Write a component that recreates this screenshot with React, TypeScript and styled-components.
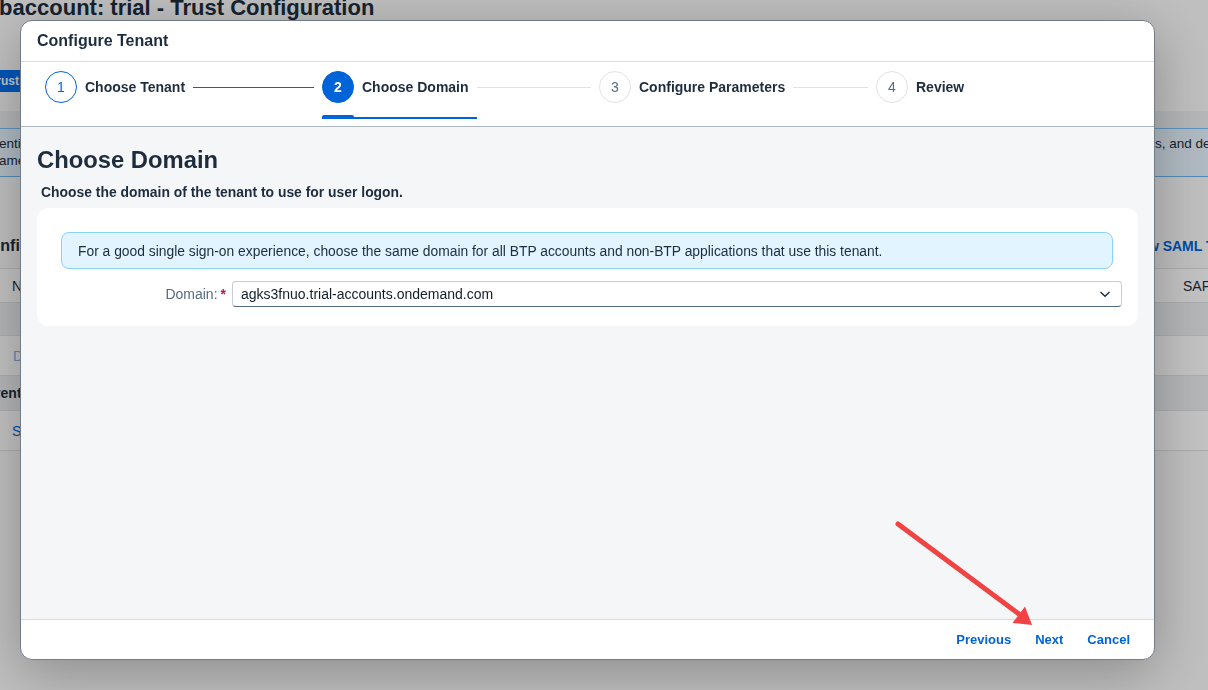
import { FC, ReactNode } from 'react';
import { styled, createGlobalStyle } from 'styled-components';

const GlobalStyle = createGlobalStyle`
  html, body {
    margin: 0;
    padding: 0;
    width: 1208px;
    height: 690px;
    overflow: hidden;
  }
  body {
    font-family: 'Liberation Sans', Arial, sans-serif;
    color: #1d2d3e;
  }
  * {
    box-sizing: border-box;
  }
`;

type StepState = 'done' | 'current' | 'todo';

const steps: { label: string; state: StepState }[] = [
  { label: 'Choose Tenant', state: 'done' },
  { label: 'Choose Domain', state: 'current' },
  { label: 'Configure Parameters', state: 'todo' },
  { label: 'Review', state: 'todo' },
];

/* background page (behind the dimmed overlay) */

const Page = styled.div`
  width: 1208px;
  height: 690px;
  background: #fbfbfc;
  overflow: hidden;
`;

const PageTitle = styled.h1`
  margin: -5px 0 0 -29px;
  font: bold 22px/26px 'Liberation Sans', Arial, sans-serif;
  color: #1d2d3e;
  white-space: nowrap;
`;

const Toolbar = styled.div`
  display: flex;
  margin-top: 49px;
  height: 22px;
`;

const EmphasizedButton = styled.span`
  display: flex;
  align-items: center;
  margin-left: -75px;
  padding: 0 8px;
  height: 22px;
  background: #0070f2;
  color: #fff;
  font-size: 12px;
  font-weight: bold;
  border-radius: 4px;
  white-space: nowrap;
`;

const Band = styled.div`
  margin-top: 19px;
  height: 17px;
  background: #edeff1;
`;

const PageStrip = styled.div`
  display: flex;
  justify-content: space-between;
  height: 49px;
  padding-top: 6px;
  background: #e8f5ff;
  border-top: 1px solid #7cc4f8;
  border-bottom: 1px solid #6fb6f0;
  font-size: 13.5px;
  line-height: 17px;
  color: #1d2d3e;
  white-space: nowrap;
`;

const Fragment = styled.div<{ $shift?: number; $width?: number }>`
  flex: none;
  margin-left: ${(p) => p.$shift ?? 0}px;
  width: ${(p) => (p.$width ? `${p.$width}px` : 'auto')};
  white-space: nowrap;
`;

const SectionRow = styled.div`
  display: flex;
  justify-content: space-between;
  margin-top: 59px;
  height: 20px;
  line-height: 20px;
`;

const SectionTitle = styled.span<{ $shift: number }>`
  margin-left: ${(p) => p.$shift}px;
  font-size: 16px;
  font-weight: bold;
  color: #1d2d3e;
  white-space: nowrap;
`;

const PageLink = styled.span<{ $width: number }>`
  flex: none;
  width: ${(p) => p.$width}px;
  font-size: 14px;
  font-weight: bold;
  color: #0064d9;
  white-space: nowrap;
`;

const Table = styled.div`
  margin-top: 12px;
  border-top: 1px solid #e1e4e7;
`;

const Row = styled.div<{ $height: number; $group?: boolean }>`
  display: flex;
  justify-content: space-between;
  align-items: center;
  height: ${(p) => p.$height}px;
  background: ${(p) => (p.$group ? '#edeff1' : '#ffffff')};
  border-bottom: 1px solid #e1e4e7;
  font-size: 14px;
  white-space: nowrap;
`;

const Cell = styled.span<{
  $shift?: number;
  $tone?: 'text' | 'link' | 'muted';
  $bold?: boolean;
  $width?: number;
}>`
  flex: none;
  margin-left: ${(p) => p.$shift ?? 0}px;
  width: ${(p) => (p.$width ? `${p.$width}px` : 'auto')};
  font-weight: ${(p) => (p.$bold ? 'bold' : 'normal')};
  color: ${(p) =>
    p.$tone === 'link' ? '#0064d9' : p.$tone === 'muted' ? '#7fb3f2' : '#1d2d3e'};
`;

/* overlay + dialog */

const Overlay = styled.div`
  position: fixed;
  inset: 0;
  display: flex;
  padding: 20px 53px 30px 20px;
  background: rgba(0, 0, 0, 0.24);
`;

const Dialog = styled.section`
  flex: 1;
  display: flex;
  flex-direction: column;
  background: #fff;
  border: 1px solid #737d87;
  border-radius: 12px;
  overflow: hidden;
  box-shadow: 0 12px 56px rgba(0, 0, 0, 0.28);
`;

const DialogHeader = styled.header`
  display: flex;
  align-items: center;
  flex: none;
  height: 41px;
  padding: 0 16px;
  border-bottom: 1px solid #d9dce0;
`;

const DialogTitle = styled.h2`
  margin: 0;
  font-size: 16px;
  font-weight: bold;
  color: #1d2d3e;
`;

const WizardNav = styled.nav`
  display: flex;
  flex: none;
  height: 65px;
  padding: 9px 0 0 24px;
  border-bottom: 1px solid #aeb8c2;
`;

const Step = styled.div<{ $last?: boolean }>`
  display: flex;
  align-items: flex-start;
  flex: ${(p) => (p.$last ? '0 0 auto' : '0 0 277px')};
`;

const StepHead = styled.div<{ $current: boolean }>`
  position: relative;
  display: flex;
  align-items: center;
  gap: 8px;
  height: 32px;
  padding-right: 8px;

  &::before,
  &::after {
    content: '';
    position: absolute;
    left: 0;
    display: ${(p) => (p.$current ? 'block' : 'none')};
    background: #0064d9;
  }
  &::after {
    top: 46px;
    right: 0;
    height: 2px;
  }
  &::before {
    top: 44px;
    width: 32px;
    height: 4px;
    border-radius: 2px 2px 0 0;
  }
`;

const StepCircle = styled.span<{ $state: StepState }>`
  display: flex;
  align-items: center;
  justify-content: center;
  width: 32px;
  height: 32px;
  border-radius: 50%;
  font-size: 14px;
  font-weight: ${(p) => (p.$state === 'current' ? 'bold' : 'normal')};
  color: ${(p) =>
    p.$state === 'current' ? '#fff' : p.$state === 'done' ? '#0064d9' : '#556b82'};
  background: ${(p) => (p.$state === 'current' ? '#0064d9' : '#fff')};
  border: 1px solid
    ${(p) => (p.$state === 'todo' ? '#dfe3e7' : '#0064d9')};
`;

const StepLabel = styled.span`
  font-size: 14px;
  font-weight: bold;
  color: #1d2d3e;
  white-space: nowrap;
`;

const Connector = styled.span<{ $done: boolean }>`
  flex: 1;
  height: 1px;
  margin: 16px 8px 0 0;
  background: ${(p) => (p.$done ? '#0064d9' : '#dfe3e7')};
`;

const Content = styled.div`
  flex: 1;
  display: flex;
  flex-direction: column;
  padding: 19px 16px 0 16px;
  background: #f5f6f7;
`;

const Heading = styled.h3`
  margin: 0;
  font-size: 23.8px;
  line-height: 28px;
  font-weight: bold;
  color: #1d2d3e;
`;

const SubTitle = styled.p`
  margin: 9px 0 0;
  padding-left: 4px;
  font-size: 13.9px;
  line-height: 18px;
  font-weight: bold;
  color: #1d2d3e;
`;

const Card = styled.div`
  display: flex;
  flex-direction: column;
  margin-top: 7px;
  padding: 24px 16px 19px 24px;
  background: #fff;
  border-radius: 12px;
`;

const InfoStrip = styled.div`
  display: flex;
  align-items: center;
  height: 37px;
  margin-right: 9px;
  padding: 0 16px;
  background: #e1f4ff;
  border: 1px solid #89d1ff;
  border-radius: 8px;
  font-size: 13.85px;
  color: #1d2d3e;
`;

const FormRow = styled.div`
  display: flex;
  align-items: center;
  margin-top: 12px;
  gap: 6px;
`;

const FieldLabel = styled.label`
  display: flex;
  justify-content: flex-end;
  align-items: center;
  gap: 3px;
  width: 165px;
  font-size: 14px;
  color: #556b82;
`;

const Required = styled.span`
  color: #b8145c;
  font-weight: bold;
`;

const Select = styled.div`
  flex: 1;
  display: flex;
  align-items: center;
  justify-content: space-between;
  height: 26px;
  padding: 0 10px 0 8px;
  background: #fff;
  border: 1px solid #c5ccd3;
  border-bottom-color: #556b82;
  border-radius: 4px;
  font-size: 14px;
  color: #131e29;
`;

const Footer = styled.footer`
  display: flex;
  justify-content: flex-end;
  align-items: center;
  flex: none;
  gap: 8px;
  height: 40px;
  padding: 0 16px 1px;
  border-top: 1px solid #d9dce0;
`;

const TextButton = styled.button`
  height: 26px;
  padding: 0 8px;
  border: none;
  background: transparent;
  font-family: 'Liberation Sans', Arial, sans-serif;
  font-size: 13px;
  font-weight: bold;
  color: #0064d9;
  cursor: pointer;
`;

const Annotation = styled.svg`
  position: fixed;
  left: 0;
  top: 0;
  pointer-events: none;
`;

const ChevronDown: FC = () => (
  <svg width="12" height="12" viewBox="0 0 12 12">
    <path d="M1.5 4 L6 8.2 L10.5 4" fill="none" stroke="#1d2d3e" strokeWidth="1.4" />
  </svg>
);

const TableRow: FC<{ height: number; group?: boolean; left?: ReactNode; right?: ReactNode }> = (
  props,
) => (
  <Row $height={props.height} $group={props.group}>
    {props.left ?? <span />}
    {props.right ?? <span />}
  </Row>
);

const BackgroundPage: FC = () => (
  <Page>
    <PageTitle>Subaccount: trial - Trust Configuration</PageTitle>
    <Toolbar>
      <EmphasizedButton>Establish Trust</EmphasizedButton>
    </Toolbar>
    <Band />
    <PageStrip>
      <Fragment $shift={-1}>
        entity providers
        <br />
        ames used
      </Fragment>
      <Fragment $width={53}>s, and devices</Fragment>
    </PageStrip>
    <SectionRow>
      <SectionTitle $shift={-21}>Configurations (1)</SectionTitle>
      <PageLink $width={78}>New SAML Trust Configuration</PageLink>
    </SectionRow>
    <Table>
      <TableRow height={34} left={<Cell $shift={12}>Name</Cell>} right={<Cell $width={25}>SAP</Cell>} />
      <TableRow height={33} group />
      <TableRow height={40} left={<Cell $shift={13} $tone="muted">Default</Cell>} />
      <TableRow height={35} group left={<Cell $shift={-29} $bold>Current</Cell>} />
      <TableRow height={40} left={<Cell $shift={12} $tone="link">SAP ID Service</Cell>} />
    </Table>
  </Page>
);

export default function App() {
  return (
    <>
      <GlobalStyle />
      <BackgroundPage />
      <Overlay>
        <Dialog>
          <DialogHeader>
            <DialogTitle>Configure Tenant</DialogTitle>
          </DialogHeader>
          <WizardNav>
            {steps.map((s, i) => {
              const last = i === steps.length - 1;
              return (
                <Step key={s.label} $last={last}>
                  <StepHead $current={s.state === 'current'}>
                    <StepCircle $state={s.state}>{i + 1}</StepCircle>
                    <StepLabel>{s.label}</StepLabel>
                  </StepHead>
                  {!last && <Connector $done={s.state === 'done'} />}
                </Step>
              );
            })}
          </WizardNav>
          <Content>
            <Heading>Choose Domain</Heading>
            <SubTitle>Choose the domain of the tenant to use for user logon.</SubTitle>
            <Card>
              <InfoStrip>
                For a good single sign-on experience, choose the same domain for all BTP accounts
                and non-BTP applications that use this tenant.
              </InfoStrip>
              <FormRow>
                <FieldLabel>
                  Domain:<Required>*</Required>
                </FieldLabel>
                <Select>
                  agks3fnuo.trial-accounts.ondemand.com
                  <ChevronDown />
                </Select>
              </FormRow>
            </Card>
          </Content>
          <Footer>
            <TextButton>Previous</TextButton>
            <TextButton>Next</TextButton>
            <TextButton>Cancel</TextButton>
          </Footer>
        </Dialog>
      </Overlay>
      <Annotation width="1208" height="690" viewBox="0 0 1208 690">
        <line x1="898" y1="524" x2="1019" y2="614" stroke="#f04444" strokeWidth="5" strokeLinecap="round" />
        <polygon points="1032,625 1012.5,623 1025,606.5" fill="#f04444" />
      </Annotation>
    </>
  );
}
